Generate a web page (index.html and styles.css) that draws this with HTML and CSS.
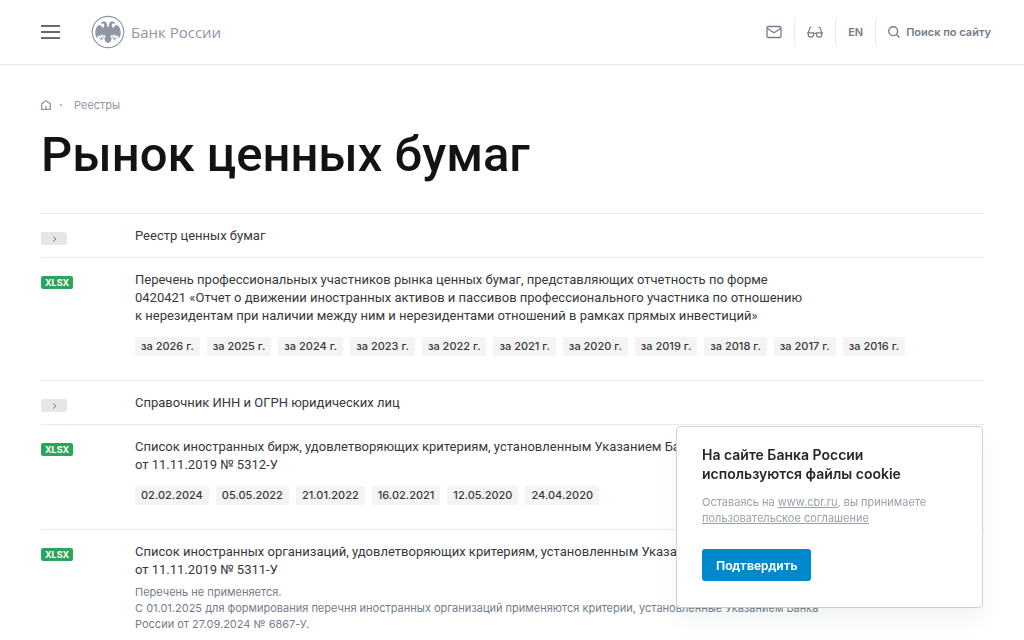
FILE: index.html
```
<!DOCTYPE html>
<html lang="ru">
<head>
    <meta charset="UTF-8">
    <meta name="viewport" content="width=device-width, initial-scale=1.0">
    <title>Рынок ценных бумаг | Банк России</title>
    <link rel="stylesheet" href="styles.css">
</head>
<body>

<header class="header">
    <button class="burger" type="button" aria-label="Меню">
        <svg width="20" height="14" viewBox="0 0 20 14" stroke="currentColor" stroke-width="1.700"><path d="M0 1h19M0 7h19M0 13h19"/></svg>
    </button>
    <a class="logo" href="#">
        <svg width="34" height="34" viewBox="0 0 34 34" fill="currentColor">
            <circle cx="17" cy="17" r="15.7" fill="none" stroke="currentColor" stroke-width="1.2"/>
            <path d="M17 12.500 16.300 11C16 8 14.800 6.200 12.800 6.200 11.200 6.200 10.200 7.200 9.800 8.700L12.600 8.600C13.500 9.300 13.400 10.800 12.700 12.200 12 12.900 11.200 12.700 10.800 12 10.400 10.300 9.300 9.600 8 10 5.600 11 4.200 14.200 4.300 18 4.400 20.300 4.900 22 5.600 23.300L6.600 20.800 7.500 22.200 8.500 19.800 9.800 21.300 11 19.200 12.500 20.600 14 19.800 14.500 21.600 13 24.500 14.200 24.600 13.800 27 15.400 26.500 16 28.300 17 27.600 18 28.300 18.600 26.500 20.200 27 19.800 24.600 21 24.500 19.500 21.600 20 19.800 21.500 20.600 23 19.200 24.200 21.300 25.500 19.800 26.500 22.200 27.400 20.800 28.400 23.300C29.100 22 29.600 20.300 29.700 18 29.800 14.200 28.400 11 26 10 24.700 9.600 23.600 10.300 23.200 12 22.800 12.700 22 12.900 21.300 12.200 20.600 10.800 20.500 9.300 21.400 8.600L24.200 8.700C23.800 7.200 22.800 6.200 21.200 6.200 19.200 6.200 18 8 17.700 11z"/>
            <path d="m13.500 21-2.500 2-2.800.3M11 23l-1.700 2.200M11 23v2.200M20.500 21l2.500 2 2.800.3M23 23l1.700 2.200M23 23v2.200" fill="none" stroke="currentColor" stroke-width=".8"/>
        </svg>
        <span class="logo-text">Банк России</span>
    </a>
    <nav class="tools">
        <a class="tool" href="#" aria-label="Написать нам">
            <svg width="16" height="16" viewBox="0 0 16 16" fill="none" stroke="currentColor" stroke-width="1.300"><rect x="1" y="2.500" width="14" height="11" rx="1.200"/><path d="M1.500 4.500 8 8.800l6.500-4.300"/></svg>
        </a>
        <a class="tool" href="#" aria-label="Версия для слабовидящих">
            <svg width="16" height="16" viewBox="0 0 16 16" fill="none" stroke="currentColor" stroke-width="1.200"><path d="M0 8.800h6.500c.8.900 2.200.9 3 0H16M1.200 8.800v1.700c0 1.700 1.100 2.700 2.600 2.700s2.700-1.100 2.700-2.700V8.800M14.800 8.800v1.700c0 1.700-1.100 2.700-2.600 2.700s-2.700-1.100-2.700-2.700V8.800M1.300 8.800l1.500-5c.2-.7.900-.7 1.700-.2M14.700 8.800l-1.500-5c-.2-.7-.9-.7-1.700-.2"/></svg>
        </a>
        <a class="tool" href="#">EN</a>
        <a class="tool search" href="#">
            <svg width="12" height="12" viewBox="0 0 12 12" fill="none" stroke="currentColor" stroke-width="1.400"><circle cx="5.200" cy="5.200" r="4.400"/><path d="m8.500 8.500 3 3"/></svg>
            Поиск по сайту
        </a>
    </nav>
</header>

<main class="content">
    <nav class="breadcrumbs">
        <a href="#" aria-label="Главная">
            <svg width="10" height="10" viewBox="0 0 10 10" fill="none" stroke="currentColor" stroke-width="1.300"><path d="M.7 9.300V3.600L5 .8l4.300 2.800v5.700zM5 9V6"/></svg>
        </a>
        <span class="dot"></span>
        <a href="#">Реестры</a>
    </nav>

    <h1>Рынок ценных бумаг</h1>

    <div class="documents">
        <div class="document">
            <div class="document-type"><span class="badge badge-link"><svg width="5" height="6" viewBox="0 0 5 6" fill="none" stroke="currentColor"><path d="m1 .5 3 2.500-3 2.500"/></svg></span></div>
            <div class="document-body">
                <a class="document-title" href="#">Реестр ценных бумаг</a>
            </div>
        </div>

        <div class="document">
            <div class="document-type"><span class="badge badge-xlsx">XLSX</span></div>
            <div class="document-body">
                <a class="document-title" href="#">Перечень профессиональных участников рынка ценных бумаг, представляющих отчетность по&nbsp;форме 0420421 «Отчет о&nbsp;движении иностранных активов и&nbsp;пассивов профессионального участника по&nbsp;отношению к&nbsp;нерезидентам при наличии между ним и&nbsp;нерезидентами отношений в&nbsp;рамках прямых инвестиций»</a>
                <div class="versions">
                    <a href="#">за 2026 г.</a>
                    <a href="#">за 2025 г.</a>
                    <a href="#">за 2024 г.</a>
                    <a href="#">за 2023 г.</a>
                    <a href="#">за 2022 г.</a>
                    <a href="#">за 2021 г.</a>
                    <a href="#">за 2020 г.</a>
                    <a href="#">за 2019 г.</a>
                    <a href="#">за 2018 г.</a>
                    <a href="#">за 2017 г.</a>
                    <a href="#">за 2016 г.</a>
                </div>
            </div>
        </div>

        <div class="document">
            <div class="document-type"><span class="badge badge-link"><svg width="5" height="6" viewBox="0 0 5 6" fill="none" stroke="currentColor"><path d="m1 .5 3 2.500-3 2.500"/></svg></span></div>
            <div class="document-body">
                <a class="document-title" href="#">Справочник ИНН и&nbsp;ОГРН юридических лиц</a>
            </div>
        </div>

        <div class="document">
            <div class="document-type"><span class="badge badge-xlsx">XLSX</span></div>
            <div class="document-body">
                <a class="document-title" href="#">Список иностранных бирж, удовлетворяющих критериям, установленным Указанием Банка России от&nbsp;11.11.2019&nbsp;№&nbsp;5312-У</a>
                <div class="versions">
                    <a href="#">02.02.2024</a>
                    <a href="#">05.05.2022</a>
                    <a href="#">21.01.2022</a>
                    <a href="#">16.02.2021</a>
                    <a href="#">12.05.2020</a>
                    <a href="#">24.04.2020</a>
                </div>
            </div>
        </div>

        <div class="document">
            <div class="document-type"><span class="badge badge-xlsx">XLSX</span></div>
            <div class="document-body">
                <a class="document-title" href="#">Список иностранных организаций, удовлетворяющих критериям, установленным Указанием Банка России от&nbsp;11.11.2019&nbsp;№&nbsp;5311-У</a>
                <p class="note">Перечень не&nbsp;применяется.<br>С&nbsp;01.01.2025 для формирования перечня иностранных организаций применяются критерии, установленные Указанием Банка России от&nbsp;27.09.2024 №&nbsp;6867-У.</p>
            </div>
        </div>
    </div>
</main>

<div class="cookie">
    <h2>На сайте Банка России используются файлы cookie</h2>
    <p>Оставаясь на <a href="#">www.cbr.ru</a>, вы принимаете <a href="#">пользовательское соглашение</a></p>
    <button class="cookie-btn" type="button">Подтвердить</button>
</div>

</body>
</html>
```
FILE: styles.css
```
* {
    box-sizing: border-box;
}

body {
    margin: 0;
    font-family: Roboto, 'Liberation Sans', sans-serif;
    font-size: 13px;
    line-height: 18px;
    color: #36383c;
    background-color: #fff;
    overflow: hidden;
}

a {
    color: inherit;
    text-decoration: none;
}

svg {
    display: block;
}

.header {
    display: flex;
    align-items: center;
    height: 65px;
    padding: 0 33px 0 41px;
    border-bottom: 1px solid #e9eaeb;
}

.burger {
    padding: 0;
    border: none;
    background: none;
    color: #36383c;
    cursor: pointer;
}

.logo {
    display: flex;
    align-items: center;
    gap: 6px;
    margin-left: 30px;
    color: #9097a3;
}

.logo-text {
    font-family: 'Open Sans', sans-serif;
    font-size: 15px;
}

.tools {
    display: flex;
    align-items: center;
    margin-left: auto;
    color: #747d8b;
    font-family: Inter, sans-serif;
    font-size: 11px;
    font-weight: 600;
}

.tool {
    display: flex;
    align-items: center;
    height: 26px;
    padding: 0 12px;
    border-right: 1px solid #e9eaeb;
}

.search {
    gap: 6px;
    padding-right: 0;
    border-right: none;
}

.content {
    padding: 31px 40px 0 41px;
}

.breadcrumbs {
    display: flex;
    align-items: center;
    color: #9097a3;
    font-family: Inter, sans-serif;
    font-size: 11px;
}

.dot {
    width: 2px;
    height: 2px;
    margin: 0 12px 0 9px;
    background-color: #b4b9c1;
}

h1 {
    margin: 12px 0 29px;
    font-size: 49px;
    font-weight: 500;
    line-height: 58px;
    color: #121315;
}

.document {
    display: flex;
    padding: 13px 0 12px;
    border-top: 1px solid #e9eaeb;
}

.document-type {
    flex: 0 0 94px;
    padding-top: 5px;
}

.badge {
    display: flex;
    align-items: center;
    justify-content: center;
    height: 13px;
    border-radius: 2px;
}

.badge-link {
    width: 26px;
    background-color: #e6e6e6;
    color: #747d8b;
}

.badge-xlsx {
    width: 32px;
    background-color: #2aa55c;
    color: #fff;
    font-family: Inter, sans-serif;
    font-size: 9px;
    font-weight: 700;
}

.document-title {
    display: block;
    max-width: 680px;
}

.versions {
    display: flex;
    flex-wrap: wrap;
    gap: 7px;
    margin: 12px 0;
}

.versions a {
    padding: 0 6px;
    border-radius: 2px;
    background-color: #f4f4f4;
    font-family: Inter, sans-serif;
    font-size: 11px;
    font-weight: 500;
    line-height: 19px;
}

.note {
    max-width: 690px;
    margin: 5px 0 0;
    color: #747d8b;
    font-family: Inter, sans-serif;
    font-size: 11px;
    line-height: 16px;
}

.cookie {
    position: fixed;
    right: 41px;
    bottom: 32px;
    width: 307px;
    padding: 18px 25px 26px;
    border: 1px solid #cfd1d5;
    border-radius: 4px;
    background-color: #fff;
    box-shadow: 0 14px 20px rgba(20, 50, 40, 0.05);
}

.cookie h2 {
    margin: 0;
    font-family: Inter, sans-serif;
    font-size: 14px;
    font-weight: 600;
    line-height: 19px;
    color: #25272a;
}

.cookie p {
    margin: 11px 0 23px;
    color: #9ba1ab;
    font-family: Inter, sans-serif;
    font-size: 11px;
    line-height: 16px;
}

.cookie p a {
    text-decoration: underline;
}

.cookie-btn {
    display: block;
    height: 32px;
    padding: 0 14px;
    border: none;
    border-radius: 3px;
    background-color: #0088cd;
    color: #fff;
    font-family: inherit;
    font-size: 13px;
    font-weight: 600;
    cursor: pointer;
}
```
